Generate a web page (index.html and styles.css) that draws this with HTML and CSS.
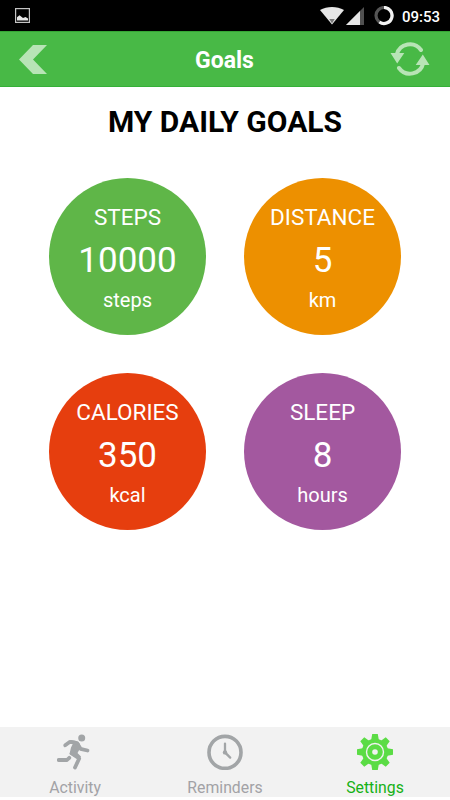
FILE: index.html
```html
<!DOCTYPE html>
<html lang="en">
<head>
  <meta charset="UTF-8">
  <meta name="viewport" content="width=device-width, initial-scale=1.0">
  <title>Goals</title>
  <link rel="stylesheet" href="styles.css">
</head>
<body>
  <div class="status-bar">
    <svg class="status-picture" width="15" height="15" viewBox="0 0 15 15">
      <rect x="0.6" y="0.6" width="13.8" height="13.8" fill="none" stroke="#c4c4c4" stroke-width="1.2"/>
      <path d="M2 12.5V9.3L4.5 7.3L8 10L10.5 9L13 10.5V12.5Z" fill="#e6e6e6"/>
    </svg>
    <div class="status-right">
      <svg width="75" height="20" viewBox="0 0 75 20">
        <path d="M0 4C7-.1 17-.1 24 4L12 18.5Z" fill="#e6e6e6"/>
        <path d="M9.3 13H14.7L12 17.5Z" fill="#777"/>
        <path d="M44 1V19H26Z" fill="#505050"/>
        <path d="M40 5V19H26Z" fill="#e6e6e6"/>
        <circle cx="64" cy="9.5" r="8" fill="none" stroke="#555" stroke-width="3.2"/>
        <path d="M64 1.5A8 8 0 1 1 59.4 16" fill="none" stroke="#f2f2f2" stroke-width="3.2"/>
      </svg>
      <span class="clock">09:53</span>
    </div>
  </div>

  <header class="header">
    <svg width="28" height="29" viewBox="0 0 28 29">
      <path d="M14 0H28L14 14.5L28 29H14L0 14.5Z" fill="#b8e4b6"/>
    </svg>
    <h1>Goals</h1>
    <svg width="40" height="34" viewBox="0 0 40 34">
      <g fill="none" stroke="#b8e4b6" stroke-width="4" stroke-linecap="round">
        <path d="M6.8 12.5A13.5 13.5 0 0 1 31 8"/>
        <path d="M33.2 21A13.5 13.5 0 0 1 9 26"/>
      </g>
      <path d="M.5 11H14.3L7.2 21.5ZM25.7 23H39.5L32.8 12.5Z" fill="#b8e4b6"/>
    </svg>
  </header>

  <main class="content">
    <h2>MY DAILY GOALS</h2>
    <div class="goals">
      <div class="goal steps">
        <span class="name">STEPS</span>
        <span class="value">10000</span>
        <span class="unit">steps</span>
      </div>
      <div class="goal distance">
        <span class="name">DISTANCE</span>
        <span class="value">5</span>
        <span class="unit">km</span>
      </div>
      <div class="goal calories">
        <span class="name">CALORIES</span>
        <span class="value">350</span>
        <span class="unit">kcal</span>
      </div>
      <div class="goal sleep">
        <span class="name">SLEEP</span>
        <span class="value">8</span>
        <span class="unit">hours</span>
      </div>
    </div>
  </main>

  <nav class="tab-bar">
    <div class="tab">
      <svg width="36" height="36" viewBox="0 0 36 36">
        <circle cx="24.7" cy="4" r="3.5" fill="#a2a5a7"/>
        <path d="M13.5 6L18.5 6.8L22.5 9.2L23.5 13.5L20.5 19L24 22.5L22 25.5L12.5 20L14 13.5L16 9.5Z" fill="#a2a5a7"/>
        <g fill="none" stroke="#a2a5a7" stroke-width="3.8" stroke-linecap="round" stroke-linejoin="round">
          <path d="M8.2 11.3L13 7.8L20 9L23.5 14.8L30.5 16.5"/>
          <path d="M19.5 12L14.7 19.5L22.2 24.5L18 33.5"/>
          <path d="M12.3 23.8L10 26H1.7"/>
        </g>
      </svg>
      <span>Activity</span>
    </div>
    <div class="tab">
      <svg width="36" height="36" viewBox="0 0 36 36">
        <circle cx="18" cy="18.4" r="16" fill="none" stroke="#a2a5a7" stroke-width="3.6"/>
        <path d="M18 9.6V18.4L23.2 23.6" fill="none" stroke="#a2a5a7" stroke-width="2.3" stroke-linecap="round"/>
        <circle cx="18" cy="18.4" r="2.2" fill="#a2a5a7"/>
      </svg>
      <span>Reminders</span>
    </div>
    <div class="tab active">
      <svg width="36" height="36" viewBox="0 0 36 36">
        <g fill="#5bdc45">
          <circle cx="18" cy="18" r="13.2"/>
          <path id="teeth" d="M15.2 0H20.8L22 7H14ZM15.2 36H20.8L22 29H14ZM0 15.2V20.8L7 22V14ZM36 15.2V20.8L29 22V14Z"/>
          <use href="#teeth" transform="rotate(45 18 18)"/>
        </g>
        <circle cx="18" cy="18" r="8.5" fill="none" stroke="#f2f2f2" stroke-width="1.4"/>
        <circle cx="18" cy="18" r="2.8" fill="#f2f2f2"/>
      </svg>
      <span>Settings</span>
    </div>
  </nav>
</body>
</html>
```
FILE: styles.css
```css
* {
  box-sizing: border-box;
}

body {
  margin: 0;
  height: 800px;
  padding-bottom: 3px;
  display: flex;
  flex-direction: column;
  overflow: hidden;
  font-family: Roboto, sans-serif;
  background-color: #fff;
}

svg {
  display: block;
}

h1, h2 {
  margin: 0;
}

.status-bar {
  display: flex;
  justify-content: space-between;
  height: 31px;
  padding: 6px 10px 0 15px;
  background-color: #000;
  color: #fff;
}

.status-picture {
  margin-top: 2px;
}

.status-right {
  display: flex;
  gap: 7px;
}

.clock {
  font-size: 15px;
  font-weight: 500;
  line-height: 22px;
}

.header {
  display: flex;
  align-items: center;
  justify-content: space-between;
  height: 56px;
  padding: 0 20px 0 19px;
  background-color: #48b946;
  border-top: 1px solid #35a535;
  border-bottom: 1px solid #35b038;
  color: #fff;
}

.header h1 {
  padding: 4px 0 0 12px;
  font-size: 23px;
  line-height: 28px;
}

.content {
  flex: 1;
}

.content h2 {
  padding-top: 17px;
  font-size: 30px;
  line-height: 36px;
  text-align: center;
  color: #000;
}

.goals {
  display: grid;
  grid-template-columns: 157px 157px;
  gap: 38px;
  justify-content: center;
  margin-top: 38px;
}

.goal {
  display: flex;
  flex-direction: column;
  align-items: center;
  height: 157px;
  padding-top: 26px;
  border-radius: 50%;
  color: #fff;
}

.steps {
  background-color: #5fb648;
}

.distance {
  background-color: #ed9000;
}

.calories {
  background-color: #e63e0e;
}

.sleep {
  background-color: #a3589f;
}

.name {
  font-size: 22.5px;
  line-height: 26px;
}

.value {
  font-size: 35px;
  line-height: 62px;
}

.unit {
  font-size: 20px;
  line-height: 16px;
}

.tab-bar {
  display: grid;
  grid-template-columns: repeat(3, 1fr);
  height: 70px;
  background-color: #f2f2f2;
}

.tab {
  display: flex;
  flex-direction: column;
  align-items: center;
  gap: 6px;
  padding-top: 7px;
  font-size: 15.8px;
  line-height: 24px;
  color: #a2a2a6;
}

.active {
  color: #16b116;
}
```
